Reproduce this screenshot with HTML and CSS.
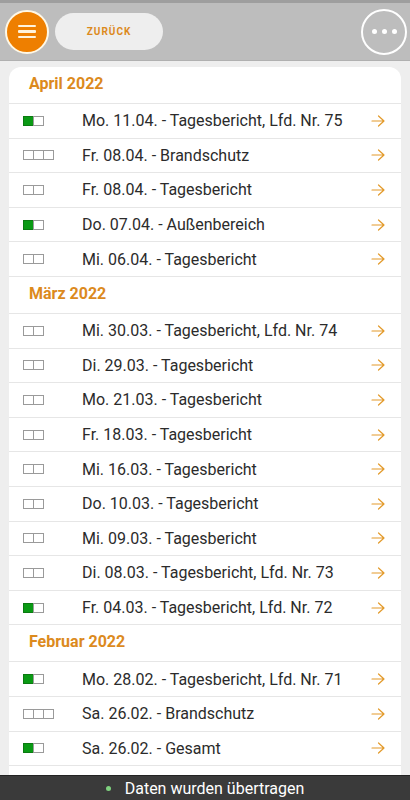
FILE: index.html
```html
<!DOCTYPE html>
<html lang="de">
<head>
  <meta charset="UTF-8">
  <meta name="viewport" content="width=device-width, initial-scale=1">
  <title>Berichte</title>
  <link rel="stylesheet" href="styles.css">
</head>
<body>
  <header class="topbar">
    <button class="menu-btn" aria-label="Menü">
      <span></span><span></span><span></span>
    </button>
    <button class="back-btn">ZURÜCK</button>
    <button class="more-btn" aria-label="Mehr">
      <i></i><i></i><i></i>
    </button>
  </header>

  <main class="card">
    <div class="month">April 2022</div>
    <div class="row"><span class="status"><b class="on"></b><b></b></span><span class="title">Mo. 11.04. - Tagesbericht, Lfd. Nr. 75</span><svg class="arrow" viewBox="0 0 14 12"><path d="M1 6h12M7.5 1l5.5 5-5.5 5"/></svg></div>
    <div class="row"><span class="status"><b></b><b></b><b></b></span><span class="title">Fr. 08.04. - Brandschutz</span><svg class="arrow" viewBox="0 0 14 12"><path d="M1 6h12M7.5 1l5.5 5-5.5 5"/></svg></div>
    <div class="row"><span class="status"><b></b><b></b></span><span class="title">Fr. 08.04. - Tagesbericht</span><svg class="arrow" viewBox="0 0 14 12"><path d="M1 6h12M7.5 1l5.5 5-5.5 5"/></svg></div>
    <div class="row"><span class="status"><b class="on"></b><b></b></span><span class="title">Do. 07.04. - Außenbereich</span><svg class="arrow" viewBox="0 0 14 12"><path d="M1 6h12M7.5 1l5.5 5-5.5 5"/></svg></div>
    <div class="row"><span class="status"><b></b><b></b></span><span class="title">Mi. 06.04. - Tagesbericht</span><svg class="arrow" viewBox="0 0 14 12"><path d="M1 6h12M7.5 1l5.5 5-5.5 5"/></svg></div>

    <div class="month">März 2022</div>
    <div class="row"><span class="status"><b></b><b></b></span><span class="title">Mi. 30.03. - Tagesbericht, Lfd. Nr. 74</span><svg class="arrow" viewBox="0 0 14 12"><path d="M1 6h12M7.5 1l5.5 5-5.5 5"/></svg></div>
    <div class="row"><span class="status"><b></b><b></b></span><span class="title">Di. 29.03. - Tagesbericht</span><svg class="arrow" viewBox="0 0 14 12"><path d="M1 6h12M7.5 1l5.5 5-5.5 5"/></svg></div>
    <div class="row"><span class="status"><b></b><b></b></span><span class="title">Mo. 21.03. - Tagesbericht</span><svg class="arrow" viewBox="0 0 14 12"><path d="M1 6h12M7.5 1l5.5 5-5.5 5"/></svg></div>
    <div class="row"><span class="status"><b></b><b></b></span><span class="title">Fr. 18.03. - Tagesbericht</span><svg class="arrow" viewBox="0 0 14 12"><path d="M1 6h12M7.5 1l5.5 5-5.5 5"/></svg></div>
    <div class="row"><span class="status"><b></b><b></b></span><span class="title">Mi. 16.03. - Tagesbericht</span><svg class="arrow" viewBox="0 0 14 12"><path d="M1 6h12M7.5 1l5.5 5-5.5 5"/></svg></div>
    <div class="row"><span class="status"><b></b><b></b></span><span class="title">Do. 10.03. - Tagesbericht</span><svg class="arrow" viewBox="0 0 14 12"><path d="M1 6h12M7.5 1l5.5 5-5.5 5"/></svg></div>
    <div class="row"><span class="status"><b></b><b></b></span><span class="title">Mi. 09.03. - Tagesbericht</span><svg class="arrow" viewBox="0 0 14 12"><path d="M1 6h12M7.5 1l5.5 5-5.5 5"/></svg></div>
    <div class="row"><span class="status"><b></b><b></b></span><span class="title">Di. 08.03. - Tagesbericht, Lfd. Nr. 73</span><svg class="arrow" viewBox="0 0 14 12"><path d="M1 6h12M7.5 1l5.5 5-5.5 5"/></svg></div>
    <div class="row"><span class="status"><b class="on"></b><b></b></span><span class="title">Fr. 04.03. - Tagesbericht, Lfd. Nr. 72</span><svg class="arrow" viewBox="0 0 14 12"><path d="M1 6h12M7.5 1l5.5 5-5.5 5"/></svg></div>

    <div class="month">Februar 2022</div>
    <div class="row"><span class="status"><b class="on"></b><b></b></span><span class="title">Mo. 28.02. - Tagesbericht, Lfd. Nr. 71</span><svg class="arrow" viewBox="0 0 14 12"><path d="M1 6h12M7.5 1l5.5 5-5.5 5"/></svg></div>
    <div class="row"><span class="status"><b></b><b></b><b></b></span><span class="title">Sa. 26.02. - Brandschutz</span><svg class="arrow" viewBox="0 0 14 12"><path d="M1 6h12M7.5 1l5.5 5-5.5 5"/></svg></div>
    <div class="row"><span class="status"><b class="on"></b><b></b></span><span class="title">Sa. 26.02. - Gesamt</span><svg class="arrow" viewBox="0 0 14 12"><path d="M1 6h12M7.5 1l5.5 5-5.5 5"/></svg></div>
    <div class="row"></div>
  </main>

  <div class="toast"><span class="dot"></span>Daten wurden übertragen</div>
</body>
</html>
```

FILE: styles.css
```css
html, body {
  margin: 0;
  height: 100%;
  overflow: hidden;
}
body {
  font-family: Roboto, "Liberation Sans", sans-serif;
  background: #eeeeee;
  color: #2b2b2b;
}
button {
  font-family: inherit;
  border: none;
  cursor: pointer;
  padding: 0;
}

/* top bar */
.topbar {
  height: 57px;
  border-top: 3px solid #9e9e9e;
  border-bottom: 1px solid #b0b0b0;
  background: #bdbdbd;
  display: flex;
  align-items: center;
  padding: 0 3px 0 5px;
}
.menu-btn {
  width: 44px;
  height: 44px;
  border-radius: 50%;
  background: #ee7f00;
  border: 2px solid #fff8e6;
  box-sizing: border-box;
  display: flex;
  flex-direction: column;
  justify-content: center;
  align-items: center;
  gap: 3px;
}
.menu-btn span {
  width: 18px;
  height: 2.5px;
  background: #fff3dc;
  border-radius: 1px;
}
.back-btn {
  margin-left: 6px;
  width: 108px;
  height: 37px;
  border-radius: 19px;
  background: #eeeeee;
  color: #dc8a1d;
  font-size: 10px;
  font-weight: 700;
  letter-spacing: 1px;
}
.more-btn {
  margin-left: auto;
  width: 46px;
  height: 46px;
  border-radius: 50%;
  background: transparent;
  border: 2px solid #fff;
  box-sizing: border-box;
  display: flex;
  justify-content: center;
  align-items: center;
  gap: 5px;
}
.more-btn i {
  width: 5px;
  height: 5px;
  border-radius: 50%;
  background: #fff;
}

/* list card */
.card {
  margin: 6px 9px 0;
  background: #fff;
  border-radius: 12px 12px 0 0;
}
.month {
  height: 37px;
  box-sizing: border-box;
  padding: 0 0 3px 20px;
  display: flex;
  align-items: center;
  font-size: 16px;
  font-weight: 700;
  color: #dc8a1d;
  border-bottom: 1px solid #e6e6e6;
}
.row {
  height: 34.6px;
  box-sizing: border-box;
  display: flex;
  align-items: center;
  padding: 0 16px 0 14px;
  border-bottom: 1px solid #e6e6e6;
}
.status {
  width: 59px;
  display: flex;
}
.status b {
  width: 11px;
  height: 10px;
  box-sizing: border-box;
  border: 1px solid #9a9a9a;
  margin-right: -1px;
}
.status b.on {
  background: #0a9a14;
  border-color: #0a7a10;
}
.title {
  flex: 1;
  font-size: 16px;
  white-space: nowrap;
}
.arrow {
  width: 14px;
  height: 12px;
  fill: none;
  stroke: #e39a2a;
  stroke-width: 1.2;
  stroke-linecap: round;
  stroke-linejoin: round;
}

/* toast */
.toast {
  position: fixed;
  left: 0;
  right: 0;
  bottom: 0;
  height: 24px;
  background: #3a3a3a;
  border-top: 1px solid #222;
  color: #fff;
  font-size: 16px;
  display: flex;
  justify-content: center;
  align-items: center;
  gap: 14px;
}
.toast .dot {
  width: 5px;
  height: 5px;
  border-radius: 50%;
  background: #7fd27f;
}
```
